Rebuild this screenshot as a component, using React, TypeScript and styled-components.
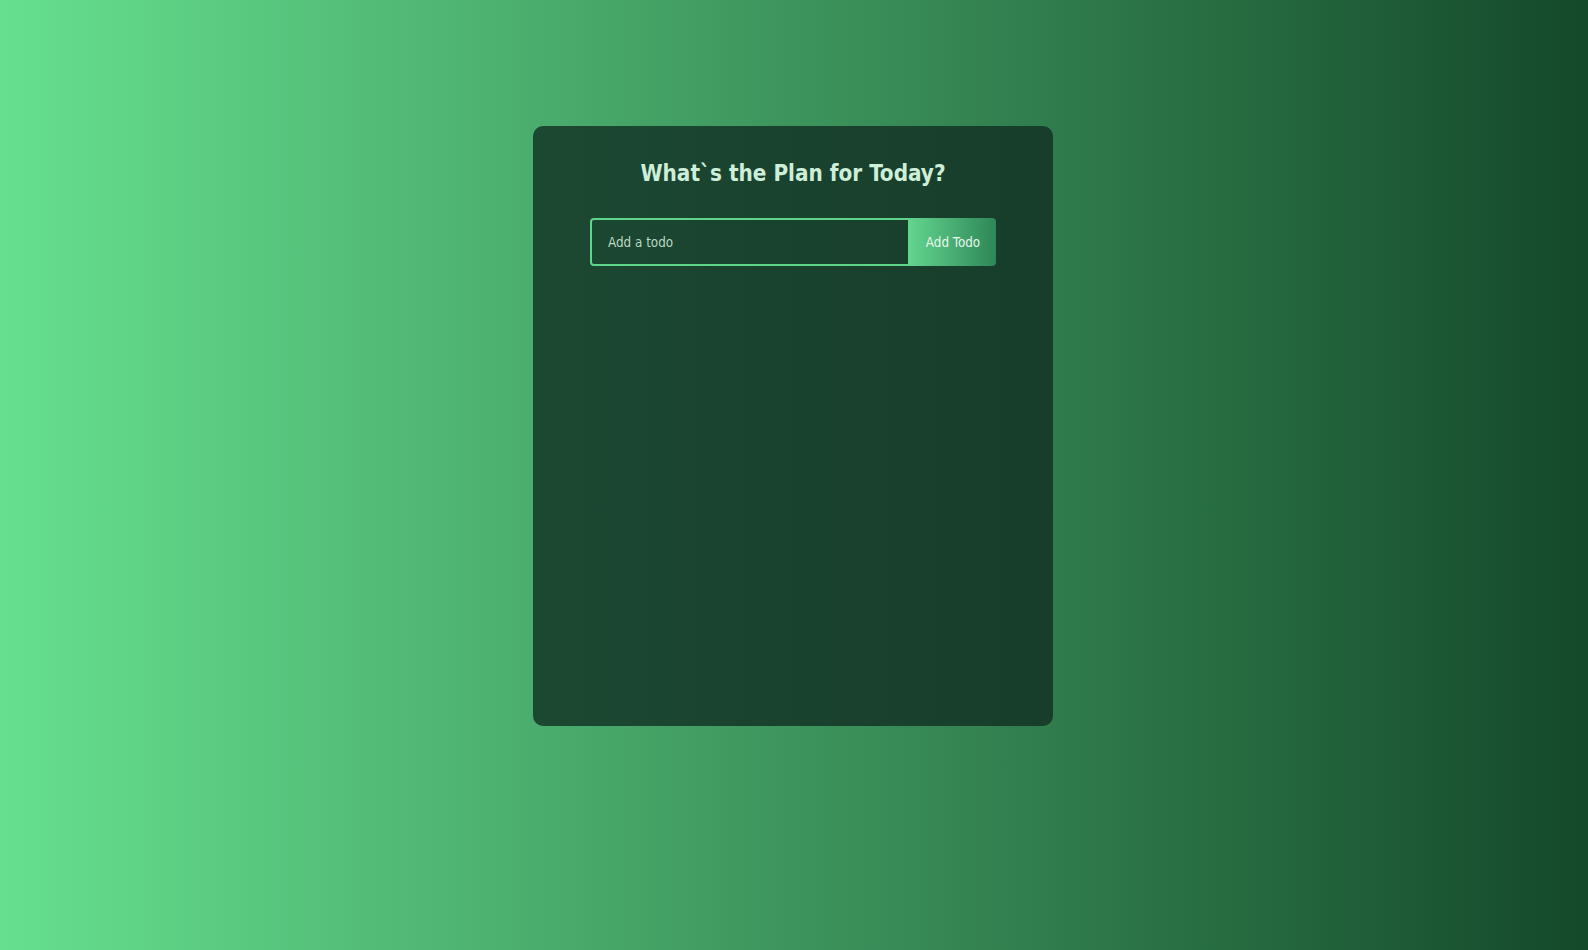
import React, { useState } from "react";
import styled, { createGlobalStyle } from "styled-components";

const GlobalStyle = createGlobalStyle`
  * { box-sizing: border-box; margin: 0; padding: 0; }
  html, body { height: 100%; }
  body {
    font-family: "DejaVu Sans", "Liberation Sans", sans-serif;
    background: linear-gradient(90deg, #66e08f 0%, #14492a 100%);
    min-height: 950px;
  }
`;

const Page = styled.div`
  min-height: 950px;
  display: flex;
  flex-direction: column;
  align-items: center;
  padding-right: 2px;
`;

const Card = styled.div`
  display: flex;
  flex-direction: column;
  width: 520px;
  min-height: 600px;
  margin-top: 126px;
  background: linear-gradient(90deg, #1c4832 0%, #173d2b 100%);
  border-radius: 10px;
  text-align: center;
  padding-bottom: 32px;
`;

const Title = styled.h1`
  margin: 32px 0;
  font-size: 22.3px;
  line-height: 28px;
  font-weight: bold;
  color: #cdeed8;
  padding-top: 1px;
  height: 28px;
  font-family: "DejaVu Sans Condensed", "DejaVu Sans", sans-serif;
`;

const Form = styled.form`
  display: flex;
  justify-content: center;
  margin-bottom: 32px;
`;

const Input = styled.input`
  width: 320px;
  height: 48px;
  padding: 14px 32px 14px 16px;
  border-radius: 4px 0 0 4px;
  border: 2px solid #5dd68b;
  outline: none;
  background: transparent;
  color: #ffffff;
  font-family: "DejaVu Sans Condensed", "DejaVu Sans", sans-serif;
  font-size: 13.33px;
  &::placeholder { color: #b8d8c3; }
`;

const Button = styled.button`
  height: 48px;
  width: 86px;
  padding: 0 14px;
  border: none;
  border-radius: 0 4px 4px 0;
  cursor: pointer;
  background: linear-gradient(90deg, #62d48e 0%, #2e8757 100%);
  color: #e6f7ec;
  font-family: "DejaVu Sans Condensed", "DejaVu Sans", sans-serif;
  font-size: 13.33px;
  white-space: nowrap;
`;

export default function App() {
  const [value, setValue] = useState("");
  return (
    <>
      <GlobalStyle />
      <Page>
        <Card>
          <Title>What`s the Plan for Today?</Title>
          <Form onSubmit={(e) => e.preventDefault()}>
            <Input
              autoFocus
              placeholder="Add a todo"
              value={value}
              onChange={(e) => setValue(e.target.value)}
            />
            <Button type="submit">Add Todo</Button>
          </Form>
        </Card>
      </Page>
    </>
  );
}
